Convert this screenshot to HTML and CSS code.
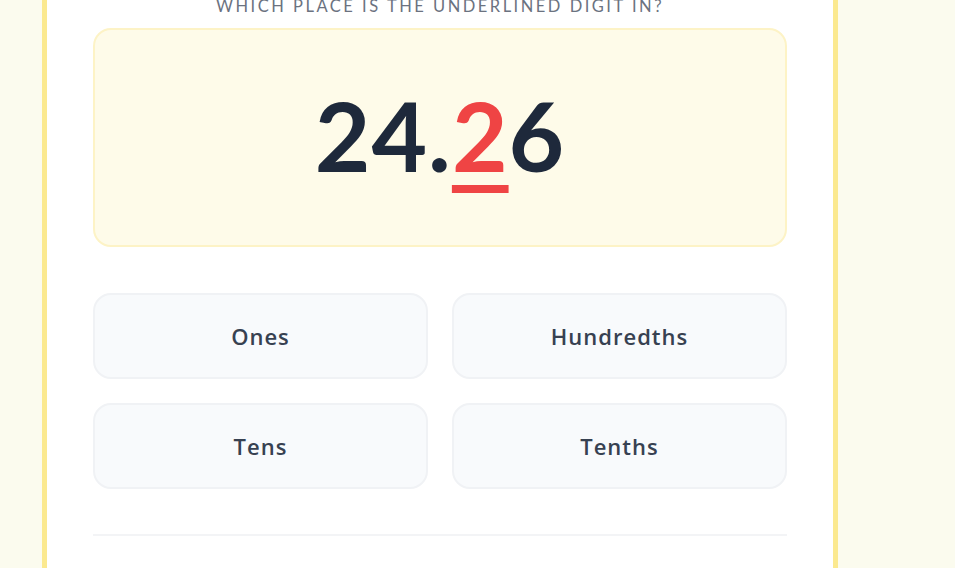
FILE: index.html
```html
<!DOCTYPE html>
<html>
<head>
<meta charset="utf-8">
<link rel="stylesheet" href="styles.css">
</head>
<body>
<div class="page">
  <div class="card">
    <div class="prompt">Which place is the underlined digit in?</div>
    <div class="number-box">
      <div class="number">24.<span class="mark">2</span>6</div>
    </div>
    <div class="options">
      <button class="option">Ones</button>
      <button class="option">Hundredths</button>
      <button class="option">Tens</button>
      <button class="option">Tenths</button>
    </div>
    <div class="divider"></div>
  </div>
</div>
</body>
</html>
```
FILE: styles.css
```css
html, body {
  margin: 0;
  padding: 0;
  height: 100%;
  overflow: hidden;
  background: #fbfbee;
  font-family: "Lato", "Inter", sans-serif;
}
.page {
  display: flex;
  padding-left: 42px;
}
.card {
  width: 694px;
  margin-top: -49px;
  padding: 40px 46px 60px;
  background: #ffffff;
  border-left: 5px solid #fbe98f;
  border-right: 5px solid #fbe98f;
  border-top: 5px solid #fbe98f;
}
.prompt {
  text-align: center;
  text-transform: uppercase;
  letter-spacing: 2.5px;
  font-size: 16.5px;
  line-height: 20px;
  color: #6b7280;
  margin-bottom: 12px;
}
.number-box {
  height: 215px;
  background: #fefbe9;
  border: 2px solid #fdf3c6;
  border-radius: 18px;
  display: flex;
  align-items: center;
  justify-content: center;
}
.number {
  font-size: 96px;
  font-weight: 700;
  color: #1e293b;
  line-height: 1;
  padding-bottom: 6px;
  letter-spacing: 1px;
}
.mark {
  color: #ef4444;
  text-decoration: underline;
  text-decoration-color: #ef4444;
  text-decoration-thickness: 8px;
  text-underline-offset: 13px;
}
.options {
  margin-top: 46px;
  display: grid;
  grid-template-columns: 1fr 1fr;
  gap: 24px;
}
.option {
  height: 86px;
  background: #f8fafc;
  border: 2px solid #f0f2f5;
  border-radius: 18px;
  font-family: "Open Sans", "Lato", sans-serif;
  font-size: 22px;
  font-weight: 600;
  letter-spacing: 1px;
  color: #374151;
}
.divider {
  margin-top: 45px;
  height: 2px;
  background: #f3f4f6;
}
```
